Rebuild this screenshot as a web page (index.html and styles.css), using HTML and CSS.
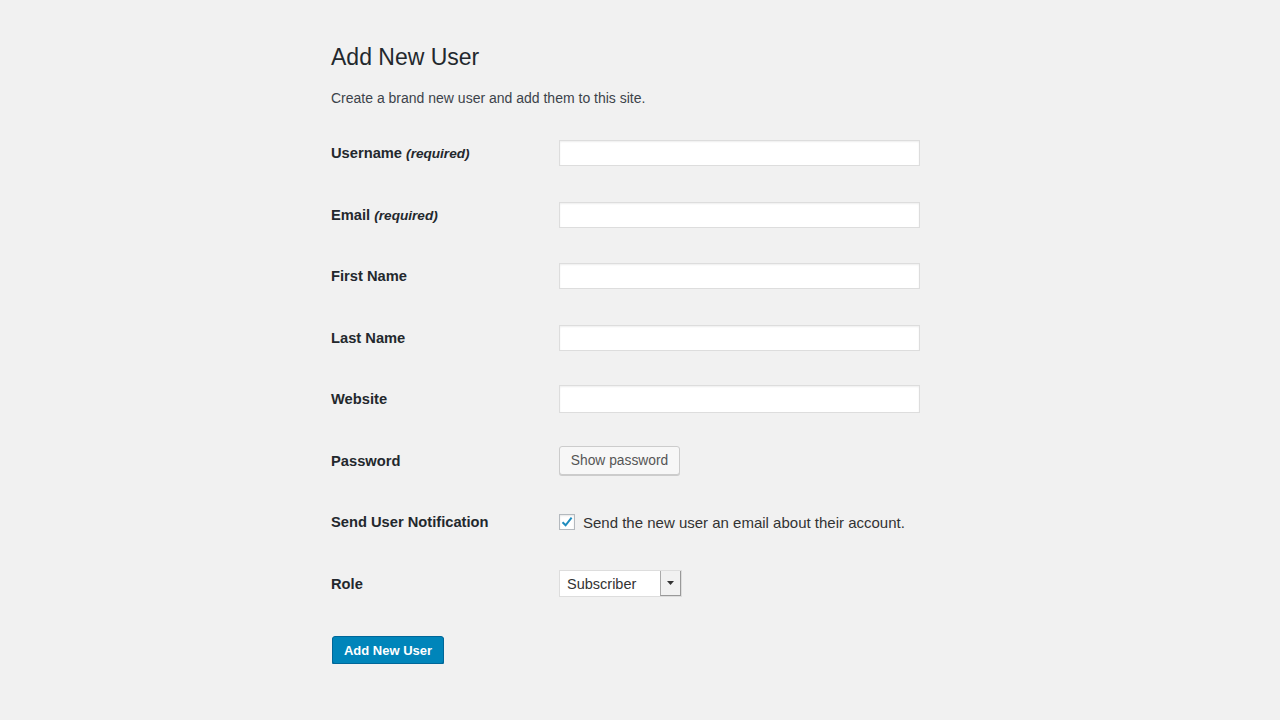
FILE: index.html
```html
<!DOCTYPE html>
<html>
<head>
<meta charset="utf-8">
<link rel="stylesheet" href="styles.css">
</head>
<body>
<div class="wrap">
  <h1 class="title">Add New User</h1>
  <p class="desc">Create a brand new user and add them to this site.</p>
  <div class="form">
    <div class="row">
      <div class="label">Username <em>(required)</em></div>
      <div class="field"><div class="input"></div></div>
    </div>
    <div class="row">
      <div class="label">Email <em>(required)</em></div>
      <div class="field"><div class="input"></div></div>
    </div>
    <div class="row">
      <div class="label">First Name</div>
      <div class="field"><div class="input"></div></div>
    </div>
    <div class="row">
      <div class="label">Last Name</div>
      <div class="field"><div class="input"></div></div>
    </div>
    <div class="row">
      <div class="label">Website</div>
      <div class="field"><div class="input input-tall"></div></div>
    </div>
    <div class="row">
      <div class="label">Password</div>
      <div class="field"><div class="btn-secondary">Show password</div></div>
    </div>
    <div class="row">
      <div class="label">Send User Notification</div>
      <div class="field check-field">
        <span class="checkbox">
          <svg width="12" height="12" viewBox="0 0 12 12"><path d="M1.5 6.2 L4.6 9.3 L10.6 1.6" fill="none" stroke="#1e8cbe" stroke-width="2"/></svg>
        </span>
        <span class="check-text">Send the new user an email about their account.</span>
      </div>
    </div>
    <div class="row">
      <div class="label">Role</div>
      <div class="field">
        <div class="select">
          <span class="select-value">Subscriber</span>
          <span class="select-arrow"><svg width="7" height="4" viewBox="0 0 7 4"><path d="M0 0 H7 L3.5 4 Z" fill="#333"/></svg></span>
        </div>
      </div>
    </div>
  </div>
  <div class="submit"><span class="btn-primary">Add New User</span></div>
</div>
</body>
</html>
```
FILE: styles.css
```css
html, body {
  margin: 0;
  padding: 0;
  background: #f1f1f1;
}
body {
  font-family: "Liberation Sans", Arial, sans-serif;
  color: #23282d;
}
.wrap {
  padding: 42px 0 0 331px;
}
.title {
  margin: 0;
  font-size: 23px;
  font-weight: 400;
  line-height: 30px;
  color: #23282d;
}
.desc {
  margin: 17px 0 0;
  font-size: 14px;
  line-height: 18px;
  color: #3c434a;
}
.form {
  margin-top: 15.5px;
}
.row {
  display: flex;
  align-items: center;
  height: 61.5px;
}
.label {
  width: 228px;
  font-size: 14.7px;
  font-weight: 700;
  color: #23282d;
}
.label em {
  font-style: italic;
  font-weight: 700;
  font-size: 13.6px;
}
.field {
  display: flex;
  align-items: center;
}
.input {
  width: 359px;
  height: 24px;
  background: #fff;
  border: 1px solid #ddd;
  box-shadow: inset 0 1px 2px rgba(0,0,0,0.07);
}
.input-tall {
  height: 26px;
}
.btn-secondary {
  box-sizing: border-box;
  height: 29px;
  width: 121px;
  display: flex;
  align-items: center;
  justify-content: center;
  font-size: 13.8px;
  color: #555;
  background: #f7f7f7;
  border: 1px solid #ccc;
  border-radius: 3px;
  box-shadow: 0 1px 0 #ccc;
}
.check-field {
  gap: 8px;
}
.checkbox {
  box-sizing: border-box;
  width: 16px;
  height: 16px;
  background: #fff;
  border: 1px solid #b4b9be;
  box-shadow: inset 0 1px 2px rgba(0,0,0,0.1);
  display: flex;
  align-items: center;
  justify-content: center;
}
.check-text {
  font-size: 15px;
  color: #333;
}
.select {
  box-sizing: border-box;
  width: 123px;
  height: 27px;
  display: flex;
  background: #fff;
  border: 1px solid #ddd;
}
.select-value {
  flex: 1;
  display: flex;
  align-items: center;
  padding-left: 7px;
  font-size: 14.5px;
  color: #333;
}
.select-arrow {
  width: 19px;
  display: flex;
  align-items: center;
  justify-content: center;
  background: #f1f1f1;
  border-left: 1px solid #aaa;
  border-right: 1px solid #999;
  border-bottom: 1px solid #999;
}
.submit {
  margin-top: 21.5px;
  padding-left: 1px;
}
.btn-primary {
  box-sizing: border-box;
  display: inline-flex;
  align-items: center;
  justify-content: center;
  width: 112px;
  height: 28px;
  background: #0085ba;
  border: 1px solid #006799;
  border-radius: 3px;
  box-shadow: 0 1px 0 #006799;
  color: #fff;
  font-size: 13px;
  font-weight: 700;
}
```
